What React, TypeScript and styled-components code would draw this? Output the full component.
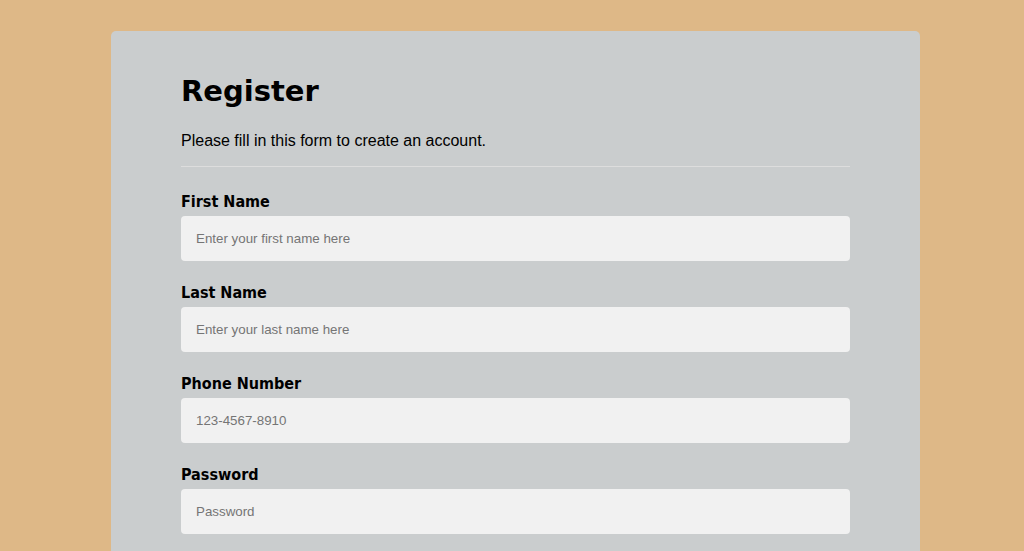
import React from "react";
import styled, { createGlobalStyle } from "styled-components";

const GlobalStyle = createGlobalStyle`
  html, body {
    margin: 0;
    padding: 0;
    background: #deb887;
  }
  * { box-sizing: border-box; }
`;

const Page = styled.div`
  padding: 31px 104px 0 111px;
`;

const Card = styled.form`
  background: #cacdce;
  border-radius: 5px;
  padding: 43px 70px 40px 70px;
  display: flex;
  flex-direction: column;
`;

const Title = styled.h1`
  margin: 0;
  font-family: "DejaVu Sans", sans-serif;
  font-weight: bold;
  font-size: 29px;
  line-height: 34px;
  color: #000;
`;

const Intro = styled.p`
  margin: 24px 0 0 0;
  font-family: "Liberation Sans", Arial, sans-serif;
  font-size: 16px;
  line-height: 18px;
  color: #000;
`;

const Rule = styled.hr`
  margin: 16px 0 0 0;
  border: none;
  border-top: 1px solid #dddddd;
  height: 0;
`;

const Fields = styled.div`
  display: flex;
  flex-direction: column;
  gap: 22px;
  margin-top: 25px;
`;

const Field = styled.div`
  display: flex;
  flex-direction: column;
  gap: 5px;
`;

const Label = styled.label`
  font-family: "DejaVu Sans Condensed", "DejaVu Sans", sans-serif;
  font-stretch: condensed;
  font-weight: bold;
  font-size: 16px;
  line-height: 19px;
  color: #000;
`;

const Input = styled.input`
  height: 45px;
  width: 100%;
  border: none;
  outline: none;
  border-radius: 4px;
  background: #f1f1f1;
  padding: 0 15px;
  font-family: "Liberation Sans", Arial, sans-serif;
  font-size: 13.333px;
  color: #000;
  &::placeholder {
    color: #757575;
  }
`;

const fields = [
  { id: "first", label: "First Name", placeholder: "Enter your first name here", type: "text" },
  { id: "last", label: "Last Name", placeholder: "Enter your last name here", type: "text" },
  { id: "phone", label: "Phone Number", placeholder: "123-4567-8910", type: "tel" },
  { id: "password", label: "Password", placeholder: "Password", type: "password" },
  { id: "repeat", label: "Repeat Password", placeholder: "Repeat Password", type: "password" },
];

export default function App() {
  return (
    <>
      <GlobalStyle />
      <Page>
        <Card onSubmit={(e) => e.preventDefault()}>
          <Title>Register</Title>
          <Intro>Please fill in this form to create an account.</Intro>
          <Rule />
          <Fields>
            {fields.map((f) => (
              <Field key={f.id}>
                <Label htmlFor={f.id}>{f.label}</Label>
                <Input id={f.id} type={f.type} placeholder={f.placeholder} />
              </Field>
            ))}
          </Fields>
        </Card>
      </Page>
    </>
  );
}
